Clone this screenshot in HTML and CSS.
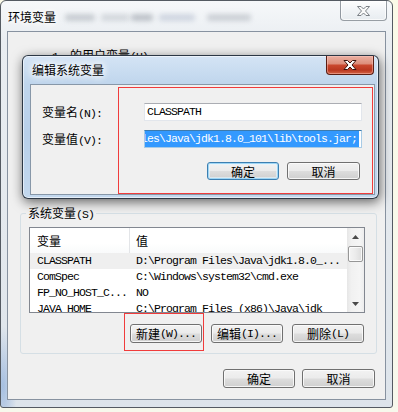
FILE: index.html
```html
<!DOCTYPE html>
<html>
<head>
<meta charset="utf-8">
<link rel="stylesheet" href="styles.css">
</head>
<body>
<div class="outer">
  <div class="otitle">
    <span class="wtitle zh">环境变量</span>
    <span class="blur b1"></span><span class="blur b2"></span><span class="blur b3"></span><span class="blur b4"></span><span class="blur b5"></span>
    <div class="close inactive">
      <svg width="15" height="10" viewBox="0 0 13 10"><polygon points="0.5,0.5 4,0.5 6.5,3 9,0.5 12.5,0.5 8.5,5 12.5,9.5 9,9.5 6.5,7 4,9.5 0.5,9.5 4.5,5" fill="#fafafa" stroke="#6e747a" stroke-width="0.9"/></svg>
    </div>
  </div>
  <div class="oclient">
    <div class="usersec"><span class="m one">1</span><span class="zh">的用户变量</span><span class="m">(U)</span></div>
    <fieldset class="group">
      <legend><span class="zh">系统变量</span><span class="m">(S)</span></legend>
      <div class="list">
        <div class="lmain">
          <div class="lhead">
            <div class="c1 zh">变量</div>
            <div class="c2 zh">值</div>
          </div>
          <div class="row sel"><div class="c1 m">CLASSPATH</div><div class="c2v m">D:\Program Files\Java\jdk1.8.0_...</div></div>
          <div class="row"><div class="c1 m">ComSpec</div><div class="c2v m">C:\Windows\system32\cmd.exe</div></div>
          <div class="row"><div class="c1 m">FP_NO_HOST_C...</div><div class="c2v m">NO</div></div>
          <div class="row"><div class="c1 m">JAVA_HOME</div><div class="c2v m">C:\Program Files (x86)\Java\jdk</div></div>
        </div>
        <div class="sb">
          <div class="sbtn"><svg width="7" height="4" viewBox="0 0 7 4"><polygon points="0,4 3.5,0 7,4" fill="#4a4a4a"/></svg></div>
          <div class="thumb"></div>
          <div class="sbfill"></div>
          <div class="sbtn"><svg width="7" height="4" viewBox="0 0 7 4"><polygon points="0,0 7,0 3.5,4" fill="#4a4a4a"/></svg></div>
        </div>
      </div>
      <div class="brow">
        <div class="btn w72"><span class="zh">新建</span><span class="m">(W)...</span></div>
        <div class="btn w72"><span class="zh">编辑</span><span class="m">(I)...</span></div>
        <div class="btn w72"><span class="zh">删除</span><span class="m">(L)</span></div>
      </div>
    </fieldset>
    <div class="obtns">
      <div class="btn w72"><span class="zh">确定</span></div>
      <div class="btn w73"><span class="zh">取消</span></div>
    </div>
  </div>

  <div class="edit">
    <div class="etitle">
      <span class="wtitle2 zh">编辑系统变量</span>
      <div class="close red">
        <svg width="14" height="10" viewBox="0 0 13 10"><polygon points="0.5,0.5 4,0.5 6.5,3 9,0.5 12.5,0.5 8.5,5 12.5,9.5 9,9.5 6.5,7 4,9.5 0.5,9.5 4.5,5" fill="#ffffff" stroke="#3c130c" stroke-width="1"/></svg>
      </div>
    </div>
    <div class="eclient">
      <div class="fields">
        <div class="lbl"><span class="zh">变量名</span><span class="m">(N):</span></div>
        <div class="inp"><span class="m">CLASSPATH</span></div>
        <div class="lbl"><span class="zh">变量值</span><span class="m">(V):</span></div>
        <div class="inp focus"><span class="m seltext">les\Java\jdk1.8.0_101\lib\tools.jar;</span></div>
      </div>
      <div class="ebtns">
        <div class="btn def w72 h18"><span class="zh">确定</span></div>
        <div class="btn w73 h18"><span class="zh">取消</span></div>
      </div>
      <div class="mark mark1"></div>
    </div>
  </div>

  <div class="mark mark2"></div>
</div>
</body>
</html>
```

FILE: styles.css
```css
* { box-sizing: border-box; }
html, body { margin: 0; padding: 0; }
body {
  width: 398px;
  height: 412px;
  overflow: hidden;
  background: linear-gradient(180deg, #fbfae8 0%, #f7f8ec 100%);
  color: #000;
  font-family: "Liberation Mono", "Noto Sans CJK SC", monospace;
  font-size: 11px;
}
.zh {
  font-family: "Noto Sans CJK SC", sans-serif;
  font-size: 12px;
  letter-spacing: 0;
}
.m {
  font-family: "Liberation Mono", monospace;
  font-size: 11.5px;
  letter-spacing: -0.9px;
  white-space: pre;
}

/* outer window */
.outer {
  position: relative;
  width: 393px;
  height: 408px;
  border: 1px solid #545a62;
  border-radius: 6px 6px 3px 3px;
  background:
    radial-gradient(ellipse 14px 60px at 2px 385px, rgba(120,160,215,0.55), rgba(120,160,215,0) 100%),
    linear-gradient(180deg, #f6f8fa 0%, #e9edf1 10%, #e3e8ed 60%, #dde4eb 100%);
  display: flex;
  flex-direction: column;
}
.otitle {
  height: 30px;
  display: flex;
  align-items: flex-start;
  padding-left: 7px;
}
.wtitle {
  margin-top: 8px;
  line-height: 15px;
  text-shadow: 0 0 6px #fff, 0 0 10px #fff, 0 0 10px #fff;
}
.blur {
  display: inline-block;
  height: 7px;
  margin-top: 13px;
  border-radius: 3px;
  background: rgba(95,105,120,0.28);
  filter: blur(2.5px);
}
.b1 { width: 30px; margin-left: 9px; }
.b2 { width: 28px; margin-left: 6px; background: rgba(95,105,120,0.2); }
.b3 { width: 22px; margin-left: 2px; background: rgba(80,90,105,0.32); }
.b4 { width: 36px; margin-left: 6px; background: rgba(90,110,150,0.22); }
.b5 { width: 44px; margin-left: 12px; background: rgba(95,105,120,0.25); }

.close {
  margin-left: auto;
  display: flex;
  align-items: center;
  justify-content: center;
  border-top: none;
  border-radius: 0 0 4px 4px;
}
.close.inactive {
  width: 47px;
  height: 20px;
  margin-right: 5px;
  border: 1px solid rgba(70,80,92,0.55);
  border-top: none;
  background: linear-gradient(180deg, rgba(255,255,255,0.75) 0%, rgba(240,243,246,0.6) 50%, rgba(226,231,236,0.6) 100%);
  box-shadow: inset 0 0 0 1px rgba(255,255,255,0.7);
}
.close.red {
  width: 48px;
  height: 19px;
  margin-right: 4px;
  border: 1px solid #5a1e13;
  border-top: none;
  background: linear-gradient(180deg, #eab0a2 0%, #de8f7c 42%, #c9472e 52%, #b93720 78%, #d46446 100%);
  box-shadow: inset 0 0 0 1px rgba(255,205,195,0.45);
}

.oclient {
  width: 379px;
  height: 369px;
  margin-left: 6px;
  border: 1px solid #8792a0;
  background: #f0f0f0;
  display: flex;
  flex-direction: column;
}
.usersec {
  height: 175px;
  padding: 17px 0 0 44px;
  line-height: 12px;
  white-space: nowrap;
}
.one { margin-right: 12px; }

.group {
  margin: 0 0 0 12px;
  width: 357px;
  min-width: 0;
  border: 1px solid #d5dfe5;
  border-radius: 3px;
  padding: 8px 11px 10px 8px;
}
.group legend {
  padding: 0 2px;
  margin-left: -3px;
  line-height: 12px;
  height: 12px;
  white-space: nowrap;
}

.list {
  width: 336px;
  height: 86px;
  border: 1px solid #828790;
  background: #fff;
  display: flex;
}
.lmain {
  flex: 1;
  overflow: hidden;
  min-width: 0;
}
.lhead {
  height: 25px;
  display: flex;
  align-items: stretch;
  background: linear-gradient(180deg, #ffffff 0%, #ffffff 60%, #f9fafb 100%);
}
.lhead .c1, .lhead .c2 {
  display: flex;
  align-items: center;
}
.c1 {
  width: 99px;
  flex: none;
  padding-left: 7px;
  white-space: pre;
  overflow: hidden;
}
.c2 {
  flex: 1;
  padding-left: 6px;
  border-left: 1px solid #e3e5e8;
}
.row {
  display: flex;
  height: 16px;
  line-height: 16px;
}
.row.sel { background: #efefef; }
.c2v {
  flex: 1;
  padding-left: 7px;
  white-space: pre;
  overflow: hidden;
}

.sb {
  width: 17px;
  flex: none;
  display: flex;
  flex-direction: column;
  background: linear-gradient(90deg, #e6e6e6 0%, #f1f1f1 25%, #f5f5f5 75%, #ededed 100%);
}
.sbtn {
  height: 17px;
  flex: none;
  display: flex;
  align-items: center;
  justify-content: center;
}
.thumb {
  height: 16px;
  margin: 1px 1px 0 1px;
  flex: none;
  border: 1px solid #979797;
  border-radius: 2px;
  background: linear-gradient(90deg, #f4f4f4 0%, #ebebeb 50%, #dcdcdc 100%);
  box-shadow: inset 0 0 0 1px rgba(255,255,255,0.8);
}
.sbfill { flex: 1; }

.btn {
  height: 19px;
  display: flex;
  align-items: center;
  justify-content: center;
  border: 1px solid #707070;
  border-radius: 3px;
  background: linear-gradient(180deg, #f2f2f2 0%, #ebebeb 48%, #dddddd 52%, #cfcfcf 100%);
  box-shadow: inset 0 0 0 1px rgba(252,252,252,0.85);
  line-height: 15px;
  white-space: nowrap;
}
.btn.h18 { height: 18px; }
.btn.def {
  border-color: #3c7fb1;
  box-shadow: inset 0 0 0 1px #9fd6f5, inset 0 0 0 2px rgba(230,245,253,0.6);
}
.w72 { width: 72px; }
.w73 { width: 73px; }

.brow {
  display: flex;
  justify-content: flex-end;
  gap: 9px;
  margin-top: 11px;
  margin-right: 1px;
}
.obtns {
  display: flex;
  justify-content: flex-end;
  gap: 7px;
  margin-top: 15px;
  padding-right: 10px;
}

/* edit dialog */
.edit {
  position: absolute;
  left: 21px;
  top: 54px;
  width: 357px;
  height: 144px;
  border: 1px solid rgba(28,38,50,0.9);
  border-radius: 6px;
  background: linear-gradient(180deg, #d4e4f5 0%, #bfd5ec 20%, #b8d0ea 55%, #c3d8ee 100%);
  box-shadow: 1px 3px 12px rgba(0,0,0,0.6), inset 0 0 0 1px rgba(255,255,255,0.55);
  display: flex;
  flex-direction: column;
}
.etitle {
  height: 28px;
  flex: none;
  display: flex;
  align-items: flex-start;
  padding-left: 9px;
}
.wtitle2 {
  margin-top: 6px;
  line-height: 15px;
  text-shadow: 0 0 6px #fff, 0 0 10px #fff, 0 0 10px #fff;
}
.eclient {
  position: relative;
  width: 345px;
  height: 111px;
  flex: none;
  margin-left: 7px;
  border: 1px solid #8797a8;
  background: #f0f0f0;
}
.fields {
  display: grid;
  grid-template-columns: 102px 218px;
  grid-auto-rows: 18px;
  row-gap: 9px;
  margin: 18px 0 0 11px;
}
.lbl {
  line-height: 18px;
  white-space: nowrap;
}
.inp {
  height: 18px;
  border: 1px solid #e2e6ec;
  border-top-color: #abadb3;
  background: #fff;
  padding-left: 2px;
  line-height: 16px;
  overflow: hidden;
  white-space: nowrap;
}
.inp.focus {
  border-color: #a8cbe6;
  border-top-color: #3d7bad;
  padding: 0;
}
.seltext {
  display: inline-block;
  margin-left: -4px;
  padding-right: 2px;
  height: 16px;
  background: #3399ff;
  color: #fff;
}
.ebtns {
  display: flex;
  justify-content: flex-end;
  gap: 8px;
  margin-top: 14px;
  padding-right: 14px;
}

/* annotation marks */
.mark {
  position: absolute;
  border: 1px solid #f03c3c;
  pointer-events: none;
}
.mark1 { left: 87px; top: 2px; width: 255px; height: 107px; }
.mark2 { left: 123px; top: 312px; width: 80px; height: 38px; }
```
